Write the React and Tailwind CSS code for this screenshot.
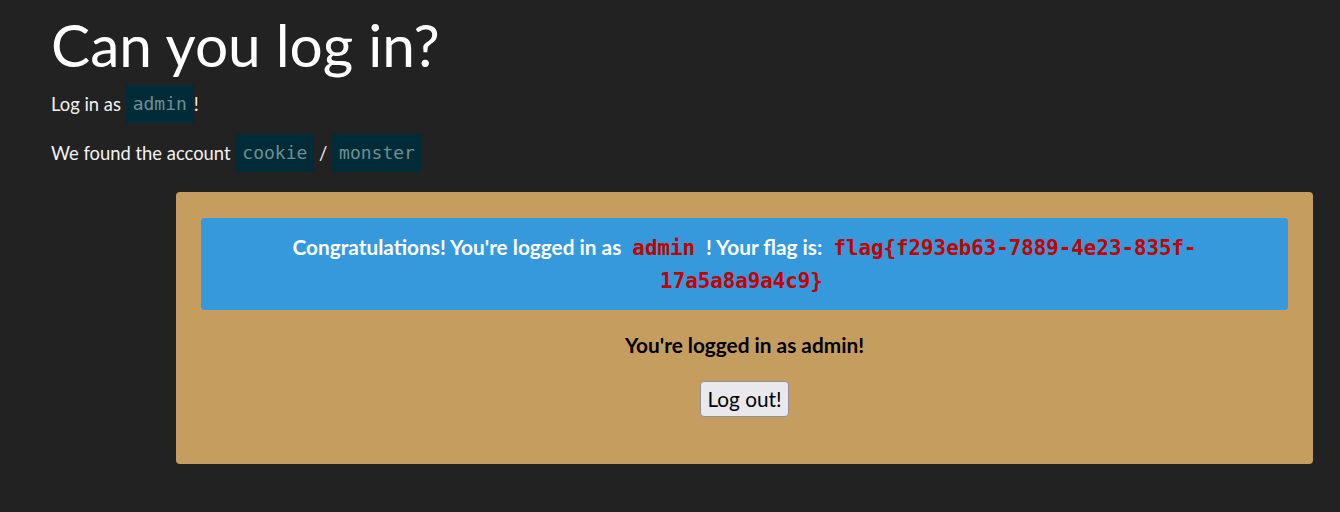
export default function App() {
  const mono = { fontFamily: '"DejaVu Sans Mono", "Liberation Mono", monospace' };
  return (
    <div className="min-h-[512px] w-full bg-[#222222] text-[#f2f2f2]" style={{ fontFamily: 'Lato, "Noto Sans", sans-serif' }}>
      <div className="pt-[8px] pl-[51px]">
        <h1 className="text-[58.6px] leading-[72px] font-normal text-white">Can you log in?</h1>
        <div className="mt-[5px] h-[38px] overflow-visible text-[18.4px] leading-[38px]">
          Log in as{" "}
          <code className="inline-block bg-[#012b36] px-[7px] align-top text-[18px] leading-[38px] text-[#6c9094]" style={mono}>admin</code>!
        </div>
        <div className="mt-[11px] h-[38px] overflow-visible text-[18.4px] leading-[38px]">
          We found the account{" "}
          <code className="inline-block bg-[#012b36] px-[7px] align-top text-[18px] leading-[38px] text-[#6c9094]" style={mono}>cookie</code>
          {" / "}
          <code className="inline-block bg-[#012b36] px-[7px] align-top text-[18px] leading-[38px] text-[#6c9094]" style={mono}>monster</code>
        </div>
      </div>
      <div className="ml-[176px] mt-[20px] w-[1137px] rounded-[4px] bg-[#c59d5f] px-[25px] pt-[26px] pb-[47px]">
        <div className="rounded-[4px] bg-[#3599db] px-[20px] py-[13px] text-center text-[20.8px] leading-[32px] font-bold text-white">
          Congratulations! You're logged in as{" "}
          <code className="px-[6px] text-[20.8px] font-bold text-[#c40000]" style={mono}>admin</code>
          {" "}! Your flag is:{" "}
          <code className="px-[6px] text-[20.8px] font-bold text-[#c40000]" style={mono}>
            flag{"{"}f293eb63-7889-4e23-835f-<br />17a5a8a9a4c9{"}"}
          </code>
        </div>
        <p className="mt-[22px] text-center text-[20.8px] leading-[25px] font-bold text-black">You're logged in as admin!</p>
        <div className="mt-[24px] flex justify-center">
          <button className="rounded-[4px] border border-[#8f8f9d] bg-[#e9e9ed] px-[6px] py-[5px] text-[20.8px] leading-[24px] text-black">
            Log out!
          </button>
        </div>
      </div>
    </div>
  );
}
